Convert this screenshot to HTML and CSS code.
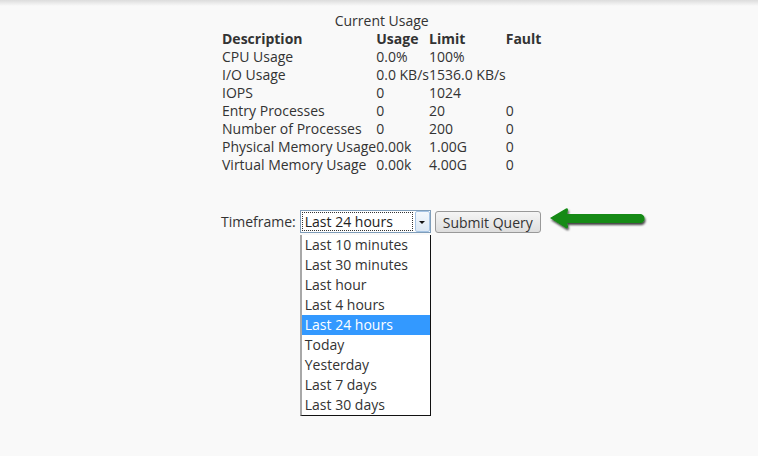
FILE: index.html
```html
<!DOCTYPE html>
<html>
<head>
<meta charset="utf-8">
<link rel="stylesheet" href="styles.css">
</head>
<body>
<div class="topshadow"></div>
<div class="content">
  <table class="usage">
    <caption>Current Usage</caption>
    <thead>
      <tr><th>Description</th><th>Usage</th><th>Limit</th><th>Fault</th></tr>
    </thead>
    <tbody>
      <tr><td>CPU Usage</td><td>0.0%</td><td>100%</td><td></td></tr>
      <tr><td>I/O Usage</td><td>0.0 KB/s</td><td>1536.0 KB/s</td><td></td></tr>
      <tr><td>IOPS</td><td>0</td><td>1024</td><td></td></tr>
      <tr><td>Entry Processes</td><td>0</td><td>20</td><td>0</td></tr>
      <tr><td>Number of Processes</td><td>0</td><td>200</td><td>0</td></tr>
      <tr><td>Physical Memory Usage</td><td>0.00k</td><td>1.00G</td><td>0</td></tr>
      <tr><td>Virtual Memory Usage</td><td>0.00k</td><td>4.00G</td><td>0</td></tr>
    </tbody>
  </table>

  <div class="form-row">
    <span class="label">Timeframe:</span>
    <div class="select">
      <div class="select-value"><span>Last 24 hours</span></div>
      <div class="select-btn"><span class="tri"></span></div>
      <ul class="dropdown">
        <li>Last 10 minutes</li>
        <li>Last 30 minutes</li>
        <li>Last hour</li>
        <li>Last 4 hours</li>
        <li class="selected">Last 24 hours</li>
        <li>Today</li>
        <li>Yesterday</li>
        <li>Last 7 days</li>
        <li>Last 30 days</li>
      </ul>
    </div>
    <button class="submit">Submit Query</button>
    <svg class="arrow" width="104" height="30" viewBox="0 0 104 30">
      <defs>
        <filter id="sh" x="-10%" y="-30%" width="130%" height="180%">
          <feGaussianBlur in="SourceAlpha" stdDeviation="1.2"/>
          <feOffset dx="1" dy="2" result="b"/>
          <feComponentTransfer><feFuncA type="linear" slope="0.75"/></feComponentTransfer>
          <feMerge><feMergeNode/><feMergeNode in="SourceGraphic"/></feMerge>
        </filter>
      </defs>
      <path filter="url(#sh)" d="M2 13 L18 3.5 Q20 2.5 20 5 L19 9 L92 9 A4.5 4.5 0 0 1 92 18 L19 18 L20 21.5 Q20 24 18 23 Z" fill="#138a13"/>
    </svg>
  </div>
</div>
</body>
</html>
```
FILE: styles.css
```css
html, body {
  margin: 0;
  padding: 0;
}
body {
  background: #f9f9f9;
  font-family: "Open Sans", "DejaVu Sans", sans-serif;
  font-size: 14px;
  color: #333;
  width: 758px;
  height: 456px;
  overflow: hidden;
}
.topshadow {
  height: 6px;
  background: linear-gradient(#dcdcdc, #f9f9f9);
}
.content {
  padding-left: 222px;
  padding-top: 6px;
}
.usage {
  border-collapse: collapse;
  border-spacing: 0;
}
.usage caption {
  line-height: 18px;
  text-align: center;
}
.usage th, .usage td {
  padding: 0;
  text-align: left;
  line-height: 18px;
  white-space: nowrap;
  vertical-align: top;
}
.usage th {
  font-weight: bold;
}
.form-row {
  display: flex;
  align-items: flex-start;
  margin-top: 36px;
  margin-left: -1px;
}
.label {
  line-height: 23px;
  margin-right: 4px;
}
.select {
  position: relative;
  width: 129px;
  height: 21px;
  border: 1px solid #7f9db9;
  background: #fff;
  display: flex;
}
.select-value {
  flex: 1;
  margin: 1px;
  border: 1px dotted #333;
  padding-left: 2px;
  line-height: 17px;
  color: #222;
}
.select-btn {
  width: 13px;
  margin: 0 0 0 1px;
  border: 1px solid #a6c4e4;
  border-radius: 2px;
  background: linear-gradient(#f4f8fc, #dce8f4);
  display: flex;
  align-items: center;
  justify-content: center;
}
.tri {
  width: 0;
  height: 0;
  border-left: 3px solid transparent;
  border-right: 3px solid transparent;
  border-top: 3px solid #111;
  margin-top: 2px;
}
.dropdown {
  position: absolute;
  left: -1px;
  top: 24px;
  width: 128px;
  margin: 0;
  padding: 0;
  list-style: none;
  background: #fff;
  border: 1px solid #111;
  border-left: 2px solid #a8a8a8;
  border-top: none;
}
.dropdown li {
  height: 20px;
  line-height: 20px;
  padding-left: 3px;
  color: #333;
}
.dropdown li.selected {
  background: #3399ff;
  color: #fff;
}
.submit {
  margin-left: 4px;
  margin-top: 1px;
  height: 22px;
  width: 106px;
  padding: 0;
  font-family: "Open Sans", "DejaVu Sans", sans-serif;
  font-size: 14px;
  color: #333;
  border: 1px solid #999;
  border-radius: 3px;
  background: linear-gradient(#f5f5f5, #dedede);
}
.arrow {
  margin-left: 7px;
  margin-top: -5px;
}
```
